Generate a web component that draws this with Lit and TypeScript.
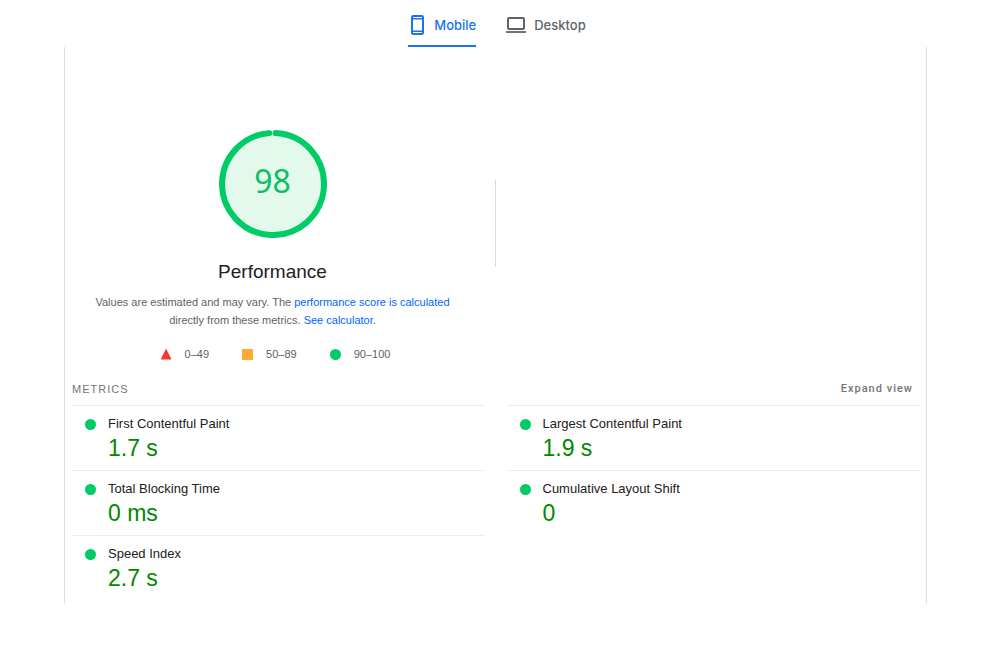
import { LitElement, html, css } from "lit";
import { customElement, property, state } from "lit/decorators.js";

interface Metric {
  name: string;
  value: string;
}

const METRICS: Metric[] = [
  { name: "First Contentful Paint", value: "1.7 s" },
  { name: "Largest Contentful Paint", value: "1.9 s" },
  { name: "Total Blocking Time", value: "0 ms" },
  { name: "Cumulative Layout Shift", value: "0" },
  { name: "Speed Index", value: "2.7 s" },
];

@customElement("score-gauge")
export class ScoreGauge extends LitElement {
  @property({ type: Number }) score = 0;

  static styles = css`
    :host {
      display: grid;
      width: 108px;
      height: 108px;
    }
    .ring,
    .score {
      grid-area: 1 / 1;
    }
    .ring {
      width: 100%;
      height: 100%;
    }
    .base {
      fill: #e3f9ec;
    }
    .arc {
      fill: none;
      stroke: #0c6;
      stroke-width: 6;
      stroke-linecap: round;
      transform: rotate(-87deg);
      transform-origin: 54px 54px;
    }
    .score {
      place-self: center;
      padding-bottom: 6px;
      font: 32px/36px "Noto Sans", sans-serif;
      color: #0dbf62;
    }
  `;

  render() {
    return html`
      <svg class="ring" viewBox="0 0 108 108" aria-hidden="true">
        <circle class="base" cx="54" cy="54" r="51" />
        <circle class="arc" cx="54" cy="54" r="51" pathLength="100" stroke-dasharray="${this.score} 100" />
      </svg>
      <span class="score">${this.score}</span>
    `;
  }
}

@customElement("app-root")
export class AppRoot extends LitElement {
  @state() private device = "mobile";
  @state() private expanded = false;

  static styles = css`
    :host {
      display: block;
      min-height: 100vh;
      background: #fff;
      font-family: "Liberation Sans", Arial, sans-serif;
      color: #212121;
    }
    * {
      box-sizing: border-box;
    }
    button {
      border: 0;
      padding: 0;
      background: none;
      cursor: pointer;
    }
    a {
      color: #06f;
      text-decoration: none;
    }
    .tabs {
      display: flex;
      justify-content: center;
      gap: 30px;
      height: 47px;
      padding-right: 6px;
    }
    .tab {
      display: flex;
      align-items: center;
      gap: 8px;
      padding-top: 5px;
      border-bottom: 2px solid transparent;
      font: 500 13px/20px Inter, sans-serif;
      color: #5f6368;
    }
    .tab[aria-selected="true"] {
      color: #1a73e8;
      border-color: #1a73e8;
    }
    .phone {
      width: 18px;
      height: 22px;
    }
    .laptop {
      width: 20px;
      height: 18px;
    }
    .report {
      margin: 0 73px 0 64px;
      padding: 83px 7px 4px;
      border: solid #dfdfdf;
      border-width: 0 1px;
    }
    .summary {
      display: grid;
      grid-template-columns: 1fr 1px 1fr;
      align-items: start;
    }
    .category {
      display: flex;
      flex-direction: column;
      align-items: center;
      padding-right: 22px;
    }
    .divider {
      height: 87px;
      margin-top: 50px;
      background: #dadada;
    }
    .title {
      margin: 22px 0 0;
      font-size: 19px;
      line-height: 24px;
      font-weight: 400;
    }
    .note {
      max-width: 360px;
      margin: 9px 0 0;
      font-size: 11px;
      line-height: 18px;
      text-align: center;
      color: #616161;
    }
    .legend {
      display: flex;
      gap: 33px;
      margin: 16px 0 0;
      padding: 0 0 0 6px;
      list-style: none;
      font-size: 11px;
      line-height: 18px;
      color: #616161;
    }
    .range {
      display: flex;
      align-items: center;
      gap: 13px;
    }
    .shape {
      width: 11px;
      height: 11px;
    }
    .fail {
      background: #f33;
      clip-path: polygon(50% 0, 100% 100%, 0 100%);
    }
    .average {
      background: #fa3;
    }
    .pass {
      border-radius: 50%;
      background: #0c6;
    }
    .toolbar {
      display: flex;
      justify-content: space-between;
      align-items: center;
      height: 22px;
      margin-top: 15px;
      padding-right: 6px;
    }
    .heading {
      margin: 0;
      font-size: 11px;
      font-weight: 400;
      letter-spacing: 1px;
      color: #757575;
    }
    .expand {
      font: 500 11px/16px Roboto, sans-serif;
      letter-spacing: 1px;
      color: #757575;
    }
    .metrics {
      display: grid;
      grid-template-columns: 1fr 1fr;
      column-gap: 22px;
      margin: 5px 0 0;
    }
    .metric {
      display: grid;
      grid-template-columns: 11px 1fr;
      column-gap: 12px;
      align-items: center;
      padding: 8px 0 8px 13px;
      border-top: 1px solid #ececec;
    }
    .name {
      font-size: 13px;
      line-height: 20px;
    }
    .value {
      grid-column: 2;
      margin: 0;
      font-size: 23px;
      line-height: 28px;
      color: #080;
    }
  `;

  private tab(id: string, label: string, icon: unknown) {
    return html`<button
      class="tab"
      role="tab"
      aria-selected=${this.device === id ? "true" : "false"}
      @click=${() => (this.device = id)}
    >
      ${icon}<span>${label}</span>
    </button>`;
  }

  render() {
    const phone = html`<svg class="phone" viewBox="0 0 18 22" fill="none" stroke="currentColor" aria-hidden="true">
      <rect x="4" y="2" width="11" height="18" rx="1.2" stroke-width="2" />
      <path d="M4 4.8h11M4 17.2h11" stroke-width="1.6" />
    </svg>`;
    const laptop = html`<svg class="laptop" viewBox="0 0 20 18" fill="none" stroke="currentColor" aria-hidden="true">
      <rect x="2" y="2" width="16" height="11" rx="1" stroke-width="2" />
      <path d="M0 16h20" stroke-width="1.8" />
    </svg>`;

    return html`
      <nav class="tabs" role="tablist" aria-label="Device">
        ${this.tab("mobile", "Mobile", phone)} ${this.tab("desktop", "Desktop", laptop)}
      </nav>
      <main class="report">
        <section class="summary">
          <div class="category">
            <score-gauge .score=${98}></score-gauge>
            <h1 class="title">Performance</h1>
            <p class="note">
              Values are estimated and may vary. The <a href="#score">performance score is calculated</a> directly from
              these metrics. <a href="#calculator">See calculator.</a>
            </p>
            <ul class="legend">
              <li class="range"><span class="shape fail"></span>0–49</li>
              <li class="range"><span class="shape average"></span>50–89</li>
              <li class="range"><span class="shape pass"></span>90–100</li>
            </ul>
          </div>
          <div class="divider"></div>
        </section>
        <div class="toolbar">
          <h2 class="heading">METRICS</h2>
          <button class="expand" aria-pressed=${this.expanded ? "true" : "false"} @click=${() => (this.expanded = !this.expanded)}>
            Expand view
          </button>
        </div>
        <dl class="metrics">
          ${METRICS.map(
            (m) => html`<div class="metric">
              <span class="shape pass"></span>
              <dt class="name">${m.name}</dt>
              <dd class="value">${m.value}</dd>
            </div>`
          )}
        </dl>
      </main>
    `;
  }
}
